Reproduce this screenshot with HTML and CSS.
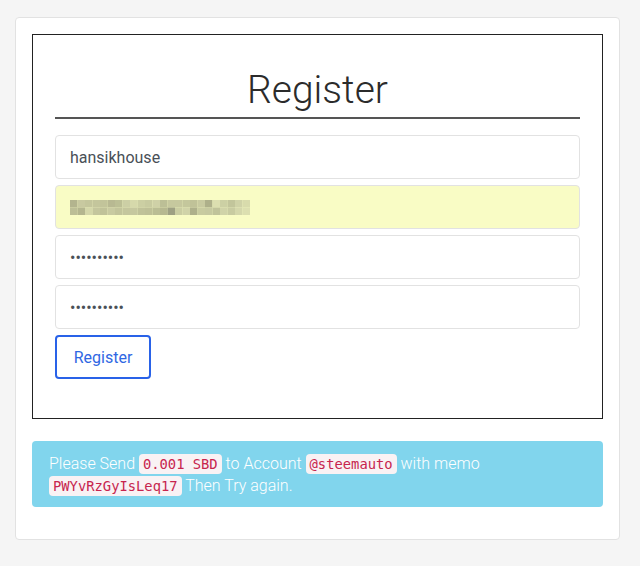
FILE: index.html
```html
<!DOCTYPE html>
<html lang="en">
<head>
<meta charset="utf-8">
<title>Register</title>
<link rel="stylesheet" href="styles.css">
</head>
<body>
<div class="card">
  <div class="panel">
    <h1 class="title">Register</h1>
    <form class="form">
      <input class="field" type="text" value="hansikhouse">
      <div class="field field-auto">
        <svg class="blur" width="180" height="15" viewBox="0 0 24 2" preserveAspectRatio="none">
          <rect x="0" y="0" width="1" height="1" fill="#b3b48e"/><rect x="1" y="0" width="1" height="1" fill="#c8c9a0"/><rect x="2" y="0" width="1" height="1" fill="#c4c69c"/><rect x="3" y="0" width="1" height="1" fill="#c4c69c"/><rect x="4" y="0" width="1" height="1" fill="#c2c49a"/><rect x="5" y="0" width="1" height="1" fill="#b8b992"/><rect x="6" y="0" width="1" height="1" fill="#bcbf95"/><rect x="7" y="0" width="1" height="1" fill="#cccfa5"/><rect x="8" y="0" width="1" height="1" fill="#d6d9ab"/><rect x="9" y="0" width="1" height="1" fill="#cccfa3"/><rect x="10" y="0" width="1" height="1" fill="#c8cba0"/><rect x="11" y="0" width="1" height="1" fill="#cfd1a7"/><rect x="12" y="0" width="1" height="1" fill="#bcbf96"/><rect x="13" y="0" width="1" height="1" fill="#c6c89e"/><rect x="14" y="0" width="1" height="1" fill="#c6c89e"/><rect x="15" y="0" width="1" height="1" fill="#c4c79c"/><rect x="16" y="0" width="1" height="1" fill="#c0c298"/><rect x="17" y="0" width="1" height="1" fill="#c8caa0"/><rect x="18" y="0" width="1" height="1" fill="#aeb08a"/><rect x="19" y="0" width="1" height="1" fill="#dcdfb0"/><rect x="20" y="0" width="1" height="1" fill="#ccd0a4"/><rect x="21" y="0" width="1" height="1" fill="#c2c59b"/><rect x="22" y="0" width="1" height="1" fill="#cfd2a7"/><rect x="23" y="0" width="1" height="1" fill="#d8dbac"/>
          <rect x="0" y="1" width="1" height="1" fill="#bcbe96"/><rect x="1" y="1" width="1" height="1" fill="#b4b68f"/><rect x="2" y="1" width="1" height="1" fill="#d4d7aa"/><rect x="3" y="1" width="1" height="1" fill="#c4c69d"/><rect x="4" y="1" width="1" height="1" fill="#c0c299"/><rect x="5" y="1" width="1" height="1" fill="#c8caa1"/><rect x="6" y="1" width="1" height="1" fill="#c2c49b"/><rect x="7" y="1" width="1" height="1" fill="#c4c69d"/><rect x="8" y="1" width="1" height="1" fill="#c6c89f"/><rect x="9" y="1" width="1" height="1" fill="#c0c299"/><rect x="10" y="1" width="1" height="1" fill="#bec097"/><rect x="11" y="1" width="1" height="1" fill="#babd94"/><rect x="12" y="1" width="1" height="1" fill="#b6b890"/><rect x="13" y="1" width="1" height="1" fill="#9ea083"/><rect x="14" y="1" width="1" height="1" fill="#cacda2"/><rect x="15" y="1" width="1" height="1" fill="#d0d3a8"/><rect x="16" y="1" width="1" height="1" fill="#aeb08b"/><rect x="17" y="1" width="1" height="1" fill="#c8cba0"/><rect x="18" y="1" width="1" height="1" fill="#c6c9a0"/><rect x="19" y="1" width="1" height="1" fill="#c0c39a"/><rect x="20" y="1" width="1" height="1" fill="#d0d3a8"/><rect x="21" y="1" width="1" height="1" fill="#c8cba1"/><rect x="22" y="1" width="1" height="1" fill="#d4d7ab"/><rect x="23" y="1" width="1" height="1" fill="#dcdfb0"/>
        </svg>
      </div>
      <input class="field" type="password" value="abcdefghij">
      <input class="field" type="password" value="abcdefghij">
      <button class="btn" type="button">Register</button>
    </form>
  </div>
  <div class="alert">Please Send <code>0.001 SBD</code> to Account <code>@steemauto</code> with memo <code>PWYvRzGyIsLeq17</code> Then Try again.</div>
</div>
</body>
</html>
```
FILE: styles.css
```css
html, body {
  margin: 0;
  padding: 0;
}
body {
  background: #f5f5f5;
  font-family: Roboto, "Liberation Sans", sans-serif;
  padding: 17px 20px 25px 15px;
}
.card {
  background: #fff;
  border: 1px solid #e2e2e2;
  border-radius: 4px;
  padding: 16px 16px 16px 16px;
}
.panel {
  border: 1px solid #222;
  padding: 22px 22px 39px 22px;
}
.title {
  margin: 0;
  font-weight: 300;
  font-size: 39px;
  line-height: 54px;
  color: #2b2b2b;
  text-align: center;
  border-bottom: 2px solid #555;
  padding-top: 6px;
}
.form {
  display: flex;
  flex-direction: column;
  align-items: flex-start;
  gap: 6px;
  margin-top: 16px;
}
.field {
  box-sizing: border-box;
  width: 100%;
  height: 44px;
  margin: 0;
  border: 1px solid #e2e2e2;
  border-radius: 4px;
  padding: 0 14px;
  font-family: Roboto, "Liberation Sans", sans-serif;
  font-size: 16px;
  color: #495057;
  background: #fff;
  outline: none;
}
.field-auto {
  background: #f9fcc5;
  display: flex;
  align-items: center;
}
.blur {
  display: block;
}
.btn {
  box-sizing: border-box;
  width: 96px;
  height: 44px;
  margin-top: 0;
  border: 2px solid #2962e8;
  border-radius: 4px;
  background: #fff;
  color: #2f67e3;
  font-family: Roboto, "Liberation Sans", sans-serif;
  font-size: 16px;
  padding: 0;
}
.alert {
  margin-top: 22px;
  margin-bottom: 16px;
  background: #81d5ed;
  border-radius: 4px;
  color: #fff;
  font-weight: 300;
  font-size: 16px;
  line-height: 22px;
  padding: 12px 17px 10px 17px;
}
.alert code {
  font-family: "DejaVu Sans Mono", monospace;
  font-size: 13.8px;
  color: #c7254e;
  background: #f9f2f4;
  border-radius: 4px;
  padding: 2px 4px;
}
```
